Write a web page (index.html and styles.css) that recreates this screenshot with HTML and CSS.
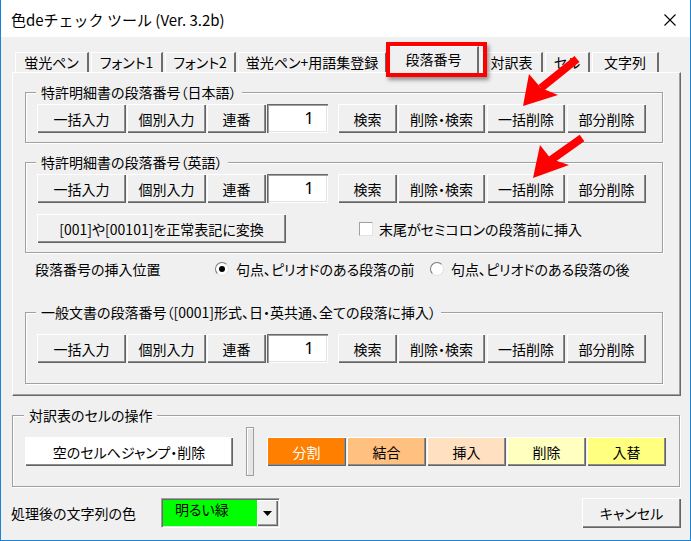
FILE: index.html
```html
<!DOCTYPE html>
<html lang="ja">
<head>
  <meta charset="UTF-8">
  <title>色deチェック ツール</title>
  <link rel="stylesheet" href="styles.css">
</head>
<body>
  <div class="window">
    <div class="titlebar">
      <span class="title">色deチェック ツール (Ver. 3.2b)</span>
      <svg class="close" width="12" height="12" viewBox="0 0 12 12"><path d="M0.5 0.5L11.5 11.5M11.5 0.5L0.5 11.5" stroke="#000" stroke-width="1.1" fill="none"/></svg>
    </div>

    <div class="tabs">
      <div class="tab">蛍光ペン</div>
      <div class="tab">フォント1</div>
      <div class="tab">フォント2</div>
      <div class="tab">蛍光ペン+用語集登録</div>
      <div class="tab active">段落番号</div>
      <div class="tab">対訳表</div>
      <div class="tab">セル</div>
      <div class="tab">文字列</div>
    </div>

    <div class="panel">
      <!-- 日本語 -->
      <div class="group">
        <div class="legend">特許明細書の段落番号（日本語）</div>
        <div class="row">
          <button class="btn bulk">一括入力</button>
          <button class="btn each">個別入力</button>
          <button class="btn seq">連番</button>
          <div class="num">1</div>
          <button class="btn find">検索</button>
          <button class="btn delfind">削除・検索</button>
          <button class="btn bulkdel">一括削除</button>
          <button class="btn partdel">部分削除</button>
        </div>
      </div>

      <!-- 英語 -->
      <div class="group next">
        <div class="legend">特許明細書の段落番号（英語）</div>
        <div class="row">
          <button class="btn bulk">一括入力</button>
          <button class="btn each">個別入力</button>
          <button class="btn seq">連番</button>
          <div class="num">1</div>
          <button class="btn find">検索</button>
          <button class="btn delfind">削除・検索</button>
          <button class="btn bulkdel">一括削除</button>
          <button class="btn partdel">部分削除</button>
        </div>
        <div class="row convert">
          <button class="btn normalize">[001]や[00101]を正常表記に変換</button>
          <span class="check"></span>
          <span class="check-label">末尾がセミコロンの段落前に挿入</span>
        </div>
      </div>

      <div class="insert-pos">
        <span class="insert-label">段落番号の挿入位置</span>
        <span class="option first"><span class="radio on"></span>句点、ピリオドのある段落の前</span>
        <span class="option"><span class="radio"></span>句点、ピリオドのある段落の後</span>
      </div>

      <!-- 一般文書 -->
      <div class="group general">
        <div class="legend">一般文書の段落番号（[0001]形式、日・英共通、全ての段落に挿入）</div>
        <div class="row">
          <button class="btn bulk">一括入力</button>
          <button class="btn each">個別入力</button>
          <button class="btn seq">連番</button>
          <div class="num">1</div>
          <button class="btn find">検索</button>
          <button class="btn delfind">削除・検索</button>
          <button class="btn bulkdel">一括削除</button>
          <button class="btn partdel">部分削除</button>
        </div>
      </div>
    </div>

    <div class="group cells">
      <div class="legend">対訳表のセルの操作</div>
      <div class="row">
        <button class="btn jump">空のセルへジャンプ・削除</button>
        <span class="sep"></span>
        <button class="btn color split">分割</button>
        <button class="btn color join">結合</button>
        <button class="btn color insert">挿入</button>
        <button class="btn color remove">削除</button>
        <button class="btn color swap">入替</button>
      </div>
    </div>

    <div class="footer">
      <span class="footer-label">処理後の文字列の色</span>
      <div class="combo">
        <span class="combo-value">明るい緑</span>
        <span class="combo-btn"><svg width="9" height="5" viewBox="0 0 9 5"><path d="M0 0H9L4.5 5Z" fill="#000"/></svg></span>
      </div>
      <button class="btn cancel">キャンセル</button>
    </div>

    <svg class="arrows" width="691" height="541" viewBox="0 0 691 541">
      <line x1="541" y1="88" x2="577" y2="59" stroke="#f00" stroke-width="8"/>
      <polygon points="523,106 529,74 541,88 558,95" fill="#f00"/>
      <line x1="551" y1="160" x2="582" y2="138" stroke="#f00" stroke-width="8"/>
      <polygon points="533,178 540,145 551,159 569,165" fill="#f00"/>
    </svg>
  </div>
</body>
</html>
```

FILE: styles.css
```css
body {
  margin: 0;
  background: #f0f0f0;
}

.window {
  position: relative;
  width: 691px;
  height: 541px;
  box-sizing: border-box;
  border: 1px solid #1883d7;
  border-top: none;
  background: #f0f0f0;
  font-family: "Noto Sans CJK JP", sans-serif;
  font-size: 14px;
  font-feature-settings: "palt";
  color: #000;
  overflow: hidden;
}

/* title bar */
.titlebar {
  height: 37px;
  background: #fff;
  display: flex;
  align-items: center;
  padding: 2px 0 0 10px;
  box-sizing: border-box;
}

.title {
  font-size: 15px;
  font-feature-settings: normal;
}

.close {
  margin-left: auto;
  margin-right: 14px;
}

/* tabs */
.tabs {
  display: flex;
  align-items: flex-end;
  height: 35px;
  padding-left: 14px;
}

.tab {
  height: 20px;
  box-sizing: border-box;
  margin-right: 2px;
  border-top: 1px solid #fff;
  border-left: 1px solid #fff;
  border-right: 2px solid #6d6d6d;
  line-height: 19px;
  text-align: center;
  background: #f0f0f0;
  white-space: nowrap;
}

.tab:nth-child(1) { width: 74px; }
.tab:nth-child(2) { width: 72px; }
.tab:nth-child(3) { width: 71px; }
.tab:nth-child(4) { width: 149px; }
.tab:nth-child(6) { width: 62px; }
.tab:nth-child(7) { width: 45px; }
.tab:nth-child(8) { width: 67px; }

.tab.active {
  position: relative;
  z-index: 2;
  width: 90px;
  height: 27px;
  margin: 0 2px -1px 0;
  line-height: 24px;
}

.tab.active::after {
  content: '';
  position: absolute;
  left: -4px;
  top: -5px;
  width: 101px;
  height: 35px;
  box-sizing: border-box;
  border: 4px solid #f00;
  box-shadow: 2px 3px 4px rgba(0, 0, 0, 0.4);
}

.panel {
  position: relative;
  z-index: 1;
  width: 669px;
  height: 324px;
  margin-left: 11px;
  box-sizing: border-box;
  border-top: 1px solid #fff;
  border-left: 1px solid #fff;
  border-right: 1px solid #696969;
  border-bottom: 1px solid #696969;
  box-shadow: inset -1px -1px 0 #a0a0a0;
  padding: 19px 0 0 12px;
}

/* etched group boxes */
.group {
  width: 638px;
  box-sizing: border-box;
  border: 1px solid #a0a0a0;
  box-shadow: 1px 1px 0 #fff, inset 1px 1px 0 #fff;
  padding: 0 0 9px 11px;
}

.group.next {
  margin-top: 19px;
}

.group.general {
  margin-top: 34px;
  padding-bottom: 20px;
}

.group.general .row {
  margin-top: 13px;
}

.legend {
  display: table;
  margin: -10px 0 0 -1px;
  padding: 0 5px;
  line-height: 18px;
  background: #f0f0f0;
  position: relative;
  white-space: nowrap;
}

.row {
  display: flex;
  align-items: center;
  gap: 1px;
  margin-top: 3px;
}

.btn {
  height: 29px;
  box-sizing: border-box;
  padding: 0;
  border: none;
  background: #f0f0f0;
  box-shadow: inset 1px 1px 0 #fff, inset -1px -1px 0 #646464, inset -2px -2px 0 #8c8c8c;
  font: inherit;
  color: #000;
  text-align: center;
  white-space: nowrap;
}

.bulk { width: 89px; }
.each { width: 79px; }
.seq { width: 59px; }
.find { width: 59px; margin-left: 9px; }
.delfind { width: 87px; }
.bulkdel { width: 78px; margin-left: 1px; }
.partdel { width: 79px; margin-left: 1px; }

.num {
  width: 61px;
  height: 29px;
  box-sizing: border-box;
  background: #fff;
  box-shadow: inset 1px 1px 0 #696969, inset 2px 2px 0 #a0a0a0, inset -1px -1px 0 #fff, inset -2px -2px 0 #e3e3e3;
  text-align: right;
  padding-right: 14px;
  font-family: "Noto Sans", sans-serif;
  font-size: 17px;
  line-height: 28px;
}

.row.convert {
  margin-top: 11px;
}

.normalize {
  width: 249px;
}

.check {
  width: 14px;
  height: 14px;
  box-sizing: border-box;
  margin-left: 72px;
  background: #fff;
  border: 1px solid;
  border-color: #a0a0a0 #e3e3e3 #e3e3e3 #a0a0a0;
}

.check-label {
  margin-left: 5px;
}

/* insert position radios */
.insert-pos {
  display: flex;
  align-items: center;
  height: 18px;
  margin: 7px 0 0 10px;
  line-height: 18px;
}

.insert-label {
  width: 180px;
}

.option {
  display: flex;
  align-items: center;
  gap: 7px;
}

.option.first {
  width: 215px;
}

.radio {
  position: relative;
  width: 14px;
  height: 14px;
  box-sizing: border-box;
  border-radius: 50%;
  background: #fff;
  border: 1px solid;
  border-color: #7a7a7a #e3e3e3 #e3e3e3 #7a7a7a;
}

.radio.on::after {
  content: '';
  position: absolute;
  left: 3px;
  top: 3px;
  width: 6px;
  height: 6px;
  border-radius: 50%;
  background: #000;
}

/* cell operations */
.group.cells {
  width: 668px;
  margin: 19px 0 0 11px;
  padding: 0 0 10px 12px;
}

.jump {
  width: 208px;
  background: #fff;
}

.sep {
  width: 8px;
  height: 49px;
  box-sizing: border-box;
  margin: 0 12px 0 12px;
  border: 1px solid #a0a0a0;
  box-shadow: inset 1px 1px 0 #fff;
  background: #e6e6e6;
}

.color { width: 79px; }
.split { background: #ff8000; color: #fff; }
.join { background: #ffc080; }
.insert { background: #ffe0c0; }
.remove { background: #ffffc0; }
.swap { background: #ffff80; }

/* footer */
.footer {
  display: flex;
  align-items: center;
  height: 30px;
  margin: 11px 9px 0 10px;
}

.footer-label {
  width: 150px;
}

.combo {
  display: flex;
  width: 119px;
  height: 30px;
  box-sizing: border-box;
  padding: 1px;
  border: 1px solid;
  border-color: #a0a0a0 #fff #fff #a0a0a0;
  box-shadow: inset 1px 1px 0 #696969, inset -1px -1px 0 #e3e3e3;
}

.combo-value {
  flex: 1;
  background: #00ff00;
  padding-left: 12px;
  line-height: 18px;
}

.combo-btn {
  width: 21px;
  display: flex;
  align-items: center;
  justify-content: center;
  background: #f0f0f0;
  box-shadow: inset 1px 1px 0 #fff, inset -1px -1px 0 #646464, inset -2px -2px 0 #a0a0a0;
}

.cancel {
  width: 99px;
  height: 30px;
  margin-left: auto;
}

.arrows {
  position: absolute;
  left: -1px;
  top: 0;
  pointer-events: none;
  z-index: 5;
}
```
